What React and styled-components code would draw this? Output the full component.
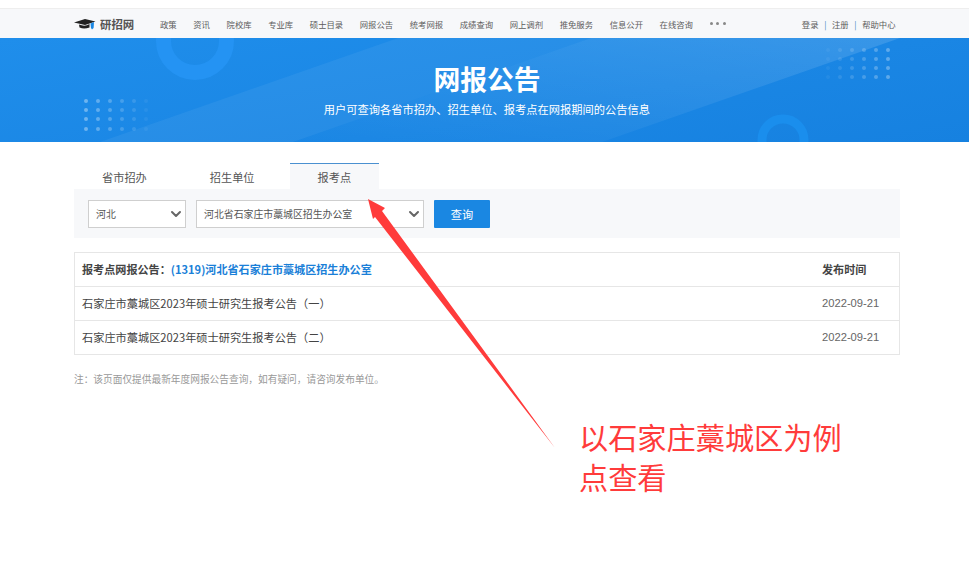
import React from 'react'
import styled, { createGlobalStyle } from 'styled-components'
import { ChevronDown } from 'lucide-react'

const GlobalStyle = createGlobalStyle`
  html, body {
    margin: 0;
    background: #fff;
    font-family: "Noto Sans CJK SC", "Noto Sans", sans-serif;
  }
  * { box-sizing: border-box; }
`

const Page = styled.div`
  position: relative;
  width: 969px;
  height: 572px;
  overflow: hidden;
  padding-top: 8px;
`

const Wrap = styled.div`
  width: 826px;
  margin-left: 74px;
`

const TopBar = styled.header`
  height: 30px;
  background: #f7f8fa;
  border-top: 1px solid #eee;
`

const TopInner = styled(Wrap)`
  display: flex;
  align-items: center;
  height: 100%;
`

const Logo = styled.div`
  display: flex;
  align-items: center;
  gap: 4px;
  width: 86px;
  font-size: 11.4px;
  font-weight: 700;
  color: #555;
`

const Menu = styled.nav`
  display: flex;
  gap: 16.6px;
  flex: 1;
  align-items: center;
  a {
    font-size: 8.35px;
    color: #5c5c5c;
    white-space: nowrap;
  }
`

const More = styled.span`
  display: flex;
  gap: 3.6px;
  i {
    width: 3px;
    height: 3px;
    border-radius: 50%;
    background: #888;
  }
`

const UserLinks = styled.div`
  display: flex;
  gap: 5.6px;
  margin-right: 4.5px;
  font-size: 8.35px;
  color: #5c5c5c;
  white-space: nowrap;
  b {
    font-weight: 400;
    color: #3a7fc0;
  }
`

const Hero = styled.section`
  position: relative;
  height: 104px;
  padding-left: 5px;
  overflow: hidden;
  background: linear-gradient(170deg, #1f8eeb 0%, #1a86e4 60%, #1681e0 100%);
  color: #fff;
  text-align: center;
`

const HeroArt = styled.svg`
  position: absolute;
  left: 0;
  top: 0;
`

const HeroTitle = styled.h1`
  position: relative;
  margin: 0;
  padding-top: 23px;
  font-size: 26.8px;
  line-height: 36px;
  font-weight: 700;
`

const HeroText = styled.p`
  position: relative;
  margin: 4px 0 0;
  font-size: 11.25px;
  line-height: 16px;
`

const Tabs = styled.div`
  display: flex;
  gap: 7px;
  margin-top: 21px;
  height: 26px;
`

const Tab = styled.div`
  padding: 0 28px;
  font-size: 11.2px;
  line-height: 26px;
  color: #555;
  background: ${p => (p.$active ? '#f7f8fa' : 'transparent')};
  border-top: 1px solid ${p => (p.$active ? '#4a90d0' : 'transparent')};
`

const Filter = styled.div`
  display: flex;
  gap: 10px;
  height: 49px;
  padding: 11px 14px 10px;
  background: #f7f8fa;
`

const Select = styled.div`
  display: flex;
  align-items: center;
  justify-content: space-between;
  width: ${p => p.$w}px;
  height: 28px;
  padding: 0 1px 0 7px;
  background: #fff;
  border: 1px solid #cfcfcf;
  font-size: 9.9px;
  color: #555;
  svg { color: #666; }
`

const QueryButton = styled.button`
  width: 56px;
  height: 28px;
  border: 0;
  border-radius: 1px;
  background: #1a87e2;
  color: #fff;
  font: inherit;
  font-size: 11.2px;
`

const Table = styled.div`
  margin-top: 14px;
  border: 1px solid #e6e6e6;
`

const Row = styled.div`
  display: flex;
  justify-content: space-between;
  align-items: center;
  height: ${p => (p.$head ? 33 : 34)}px;
  padding: 0 19px 2px 7px;
  font-size: ${p => (p.$head ? 11.1 : 11.2)}px;
  color: #444;
  font-weight: ${p => (p.$head ? 700 : 400)};
  border-top: ${p => (p.$head ? '0' : '1px solid #e6e6e6')};
  a { color: #1a7fd8; }
`

const DateCell = styled.span`
  width: 58px;
  font-family: "Liberation Sans", sans-serif;
  font-size: 11.2px;
  color: #666;
  white-space: nowrap;
`

const HeadDate = styled.span`
  width: 58px;
  color: #444;
`

const Note = styled.p`
  margin: 17px 0 0;
  font-size: 9.7px;
  line-height: 15px;
  color: #999;
`

const ArrowLayer = styled.svg`
  position: absolute;
  left: 0;
  top: 0;
  pointer-events: none;
`

const Callout = styled.div`
  position: absolute;
  left: 579px;
  top: 416px;
  width: 270px;
  font-size: 29.2px;
  line-height: 40px;
  color: #ff3b3b;
`

const menu = ['政策', '资讯', '院校库', '专业库', '硕士目录', '网报公告', '统考网报', '成绩查询', '网上调剂', '推免服务', '信息公开', '在线咨询']

function HeroDecor() {
  const leftDots = [86, 98, 110, 122, 134, 146]
  const rightDots = [828, 840, 852, 864, 876, 888]
  return (
    <HeroArt width="969" height="104" viewBox="0 0 969 104">
      <defs>
        <linearGradient id="band" x1="0" y1="1" x2="1" y2="0">
          <stop offset="0" stopColor="#fff" stopOpacity="0" />
          <stop offset="1" stopColor="#fff" stopOpacity="0.13" />
        </linearGradient>
      </defs>
      <polygon points="100,104 398,0 591,0 293,104" fill="#fff" opacity="0.055" />
      <polygon points="293,104 591,0 900,0 602,104" fill="url(#band)" />
      <circle cx="195" cy="3" r="31.5" fill="none" stroke="#2493f3" strokeWidth="15" />
      <circle cx="783" cy="102" r="21" fill="none" stroke="#1a8eed" strokeWidth="9" />
      {[63, 72, 81, 91].map(y =>
        leftDots.map((x, i) => (
          <circle key={`l${x}${y}`} cx={x} cy={y} r="2" fill="#fff" opacity={0.36 - i * 0.06} />
        ))
      )}
      {[12, 21, 30, 39].map(y =>
        rightDots.map((x, i) => (
          <circle key={`r${x}${y}`} cx={x} cy={y} r="2" fill="#fff" opacity={0.05 + i * 0.05} />
        ))
      )}
    </HeroArt>
  )
}

export default function App() {
  return (
    <Page>
      <GlobalStyle />
      <TopBar>
        <TopInner>
          <Logo>
            <svg width="22" height="14" viewBox="0 0 22 14">
              <path d="M0 5.5 L11 2 L21.5 4.5 L11 8 Z" fill="#222" />
              <path d="M5 7.5 Q11 10 15.5 7 L15.5 10.5 Q10 12.5 5.5 10.5 Z" fill="#222" />
              <path d="M16.5 6.5 L20 5 L19.6 11 L18 12.5 L17 11 Z" fill="#1a87e2" />
            </svg>
            <span>研招网</span>
          </Logo>
          <Menu>
            {menu.map(m => <a key={m}>{m}</a>)}
            <More><i /><i /><i /></More>
          </Menu>
          <UserLinks>
            <span>登录</span><b>|</b><span>注册</span><b>|</b><span>帮助中心</span>
          </UserLinks>
        </TopInner>
      </TopBar>

      <Hero>
        <HeroDecor />
        <HeroTitle>网报公告</HeroTitle>
        <HeroText>用户可查询各省市招办、招生单位、报考点在网报期间的公告信息</HeroText>
      </Hero>

      <Wrap>
        <Tabs>
          <Tab>省市招办</Tab>
          <Tab>招生单位</Tab>
          <Tab $active>报考点</Tab>
        </Tabs>
        <Filter>
          <Select $w={98}>河北<ChevronDown size={16} strokeWidth={3} /></Select>
          <Select $w={228}>河北省石家庄市藁城区招生办公室<ChevronDown size={16} strokeWidth={3} /></Select>
          <QueryButton>查询</QueryButton>
        </Filter>

        <Table>
          <Row $head>
            <span>报考点网报公告：<a>(1319)河北省石家庄市藁城区招生办公室</a></span>
            <HeadDate>发布时间</HeadDate>
          </Row>
          <Row>
            <span>石家庄市藁城区2023年硕士研究生报考公告（一）</span>
            <DateCell>2022-09-21</DateCell>
          </Row>
          <Row>
            <span>石家庄市藁城区2023年硕士研究生报考公告（二）</span>
            <DateCell>2022-09-21</DateCell>
          </Row>
        </Table>
        <Note>注：该页面仅提供最新年度网报公告查询，如有疑问，请咨询发布单位。</Note>
      </Wrap>

      <ArrowLayer width="969" height="572" viewBox="0 0 969 572">
        <polygon points="368,199 385,208 382,211 555,448 375,217 373,219" fill="#ff3b3b" />
      </ArrowLayer>
      <Callout>以石家庄藁城区为例点查看</Callout>
    </Page>
  )
}
